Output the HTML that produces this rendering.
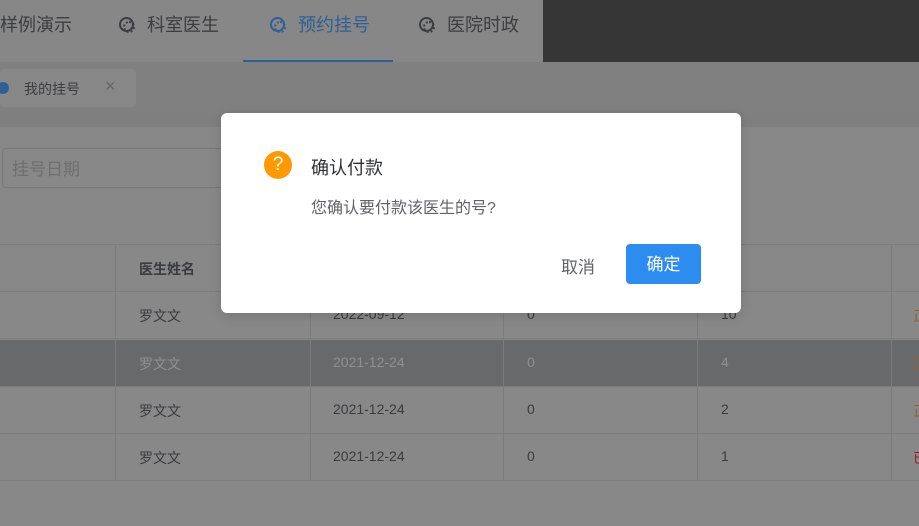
<!DOCTYPE html>
<html><head><meta charset="utf-8"><style>
*{margin:0;padding:0;box-sizing:border-box}
html,body{background:#888}
body{width:919px;height:526px;overflow:hidden;position:relative;font-family:"Liberation Sans","Noto Sans CJK SC",sans-serif}
.a{position:absolute;white-space:nowrap}
.nav{font-size:18px;color:#3c3d40;top:11px}
.ic{display:inline-block;width:15px;height:15px;border:2px solid currentColor;border-radius:50%;position:absolute;top:17px}
.ic:after{content:"";position:absolute;left:1.5px;top:1.5px;width:8px;height:8px;border:2px dotted currentColor;border-radius:50%}
.row{position:absolute;left:0;width:919px;height:47px;border-bottom:1px solid #7c7c7c;background:#888}
.vl{position:absolute;top:245px;height:236px;width:1px;background:#7c7c7c}
.c{position:absolute;font-size:14px;color:#3a3b3e;top:14px}
</style></head><body>
<div class="a" style="left:0;top:0;width:543px;height:62px;background:#878787"></div>
<div class="a" style="left:543px;top:0;width:376px;height:62px;background:#363636"></div>
<div class="a nav" style="left:0">样例演示</div>
<div class="ic" style="left:119px;color:#3c3d40"></div><div class="a nav" style="left:147px">科室医生</div>
<div class="ic" style="left:270px;color:#2e5f95"></div><div class="a nav" style="left:298px;color:#2e5f95">预约挂号</div>
<div class="a" style="left:243px;top:60px;width:150px;height:2px;background:#2e5f95"></div>
<div class="ic" style="left:419px;color:#3c3d40"></div><div class="a nav" style="left:447px">医院时政</div>
<div class="a" style="left:0;top:62px;width:919px;height:51px;background:#808080"></div>
<div class="a" style="left:0;top:69px;width:136px;height:38px;background:#888;border-radius:3px"></div>
<div class="a" style="left:-3px;top:82px;width:12px;height:12px;border-radius:50%;background:#2e5f95"></div>
<div class="a" style="left:24px;top:79px;font-size:14px;color:#3c3d40">我的挂号</div>
<div class="a" style="left:105px;top:76px;font-size:18px;color:#666;line-height:20px">×</div>
<div class="a" style="left:0;top:113px;width:919px;height:14px;background:#7f7f7f"></div>
<div class="a" style="left:0;top:127px;width:919px;height:399px;background:#888"></div>
<div class="a" style="left:2px;top:148px;width:240px;height:40px;border:1px solid #7a7a7a;border-radius:4px"></div>
<div class="a" style="left:12px;top:155px;font-size:17px;color:#6e6e6e">挂号日期</div>
<div class="a" style="left:0;top:244px;width:919px;height:1px;background:#7c7c7c"></div>
<div class="row" style="top:245px"><div class="c" style="left:139px;font-weight:bold">医生姓名</div><div class="c" style="left:721px">号</div></div>
<div class="row" style="top:292px"><div class="c" style="left:139px">罗文文</div><div class="c" style="left:333px">2022-09-12</div><div class="c" style="left:527px">0</div><div class="c" style="left:721px">10</div><div class="c" style="left:913px;color:#8a6628">正</div></div>
<div class="row" style="top:340px;background:#68696b"><div class="c" style="left:139px;color:#909090">罗文文</div><div class="c" style="left:333px;color:#909090">2021-12-24</div><div class="c" style="left:527px;color:#909090">0</div><div class="c" style="left:721px;color:#909090">4</div><div class="c" style="left:913px;color:#8a6628">正</div></div>
<div class="row" style="top:387px"><div class="c" style="left:139px">罗文文</div><div class="c" style="left:333px">2021-12-24</div><div class="c" style="left:527px">0</div><div class="c" style="left:721px">2</div><div class="c" style="left:913px;color:#8a6628">正</div></div>
<div class="row" style="top:434px"><div class="c" style="left:139px">罗文文</div><div class="c" style="left:333px">2021-12-24</div><div class="c" style="left:527px">0</div><div class="c" style="left:721px">1</div><div class="c" style="left:913px;color:#a02020">已</div></div>
<div class="vl" style="left:115px"></div><div class="vl" style="left:310px"></div><div class="vl" style="left:503px"></div><div class="vl" style="left:697px"></div><div class="vl" style="left:891px"></div>
<div class="a" style="left:221px;top:113px;width:520px;height:200px;background:#fff;border-radius:6px;box-shadow:0 2px 12px rgba(0,0,0,.15)"></div>
<div class="a" style="left:264px;top:151px;width:28px;height:28px;border-radius:50%;background:#ff9900;color:#fff;font-size:19px;text-align:center;line-height:28px">?</div>
<div class="a" style="left:311px;top:154px;font-size:18px;color:#303133">确认付款</div>
<div class="a" style="left:311px;top:194px;font-size:16px;color:#606266">您确认要付款该医生的号?</div>
<div class="a" style="left:561px;top:253px;font-size:17px;color:#606266">取消</div>
<div class="a" style="left:626px;top:244px;width:75px;height:40px;background:#2d8cf0;border-radius:4px;color:#fff;font-size:17px;text-align:center;line-height:42px">确定</div>
</body></html>
